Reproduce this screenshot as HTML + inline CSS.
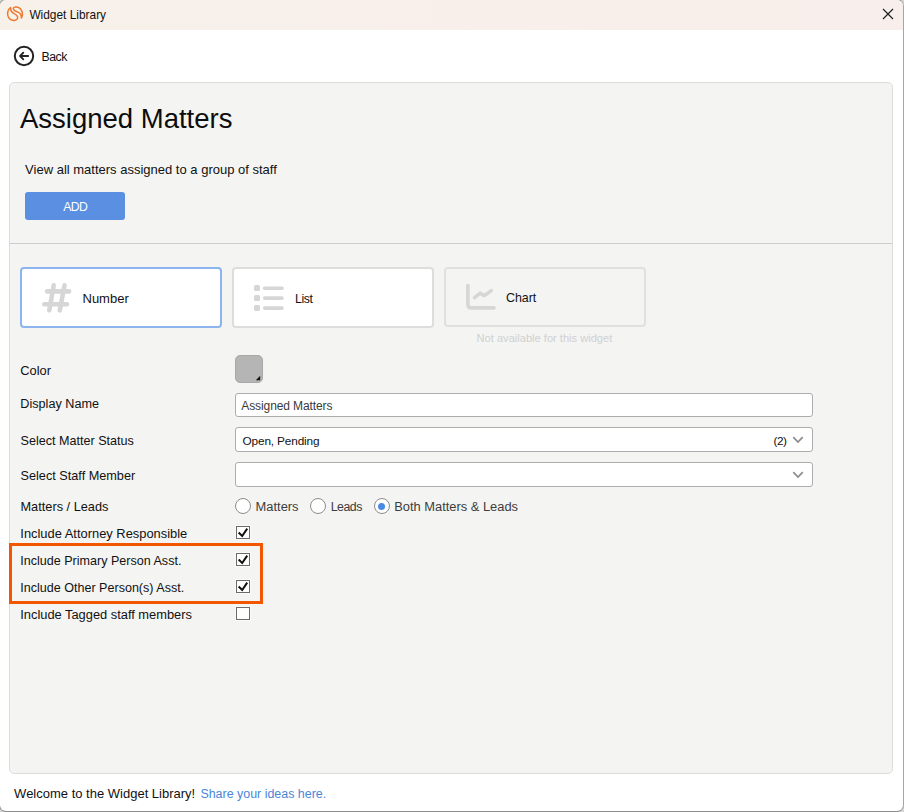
<!DOCTYPE html>
<html><head><meta charset="utf-8"><style>
*{margin:0;padding:0;box-sizing:border-box}
html,body{width:904px;height:812px;overflow:hidden;background:#d6d6d6;position:relative;font-family:"Liberation Sans",sans-serif}
#win{position:absolute;left:-1px;top:-1px;width:905px;height:813px;border:1px solid #9a9a9a;border-right-color:#a6a6a6;border-bottom-color:#8e8e8e;border-radius:7px;background:#fff;overflow:hidden}
#inner{position:absolute;left:0;top:0;width:904px;height:812px}
.t{position:absolute;white-space:nowrap}
#titlebar{position:absolute;left:0;top:0;width:903px;height:30px;background:linear-gradient(90deg,#f8f1ea,#f8eeeb)}
#panel{position:absolute;left:9px;top:82px;width:884px;height:692px;background:#f4f4f3;border:1px solid #dcdcdc;border-radius:5px}
#add{position:absolute;left:25px;top:192px;width:100px;height:28px;background:#5a8fe2;border-radius:3px}
#divider{position:absolute;left:10px;top:243px;width:882px;height:1px;background:#cdcdcd}
.card{position:absolute;width:202px;height:61px;border:2px solid #ddd;border-radius:4px}
#swatch{position:absolute;left:235px;top:355px;width:28px;height:28px;background:#b5b5b5;border:1px solid #a9a9a9;border-radius:5px}
.inp{position:absolute;left:235px;width:578px;background:#fff;border:1px solid #adadad;border-radius:3px}
.radio{position:absolute;width:16px;height:16px;border-radius:50%;border:1px solid #8c8c8c;background:#fff}
.cb{position:absolute;left:236px;width:14px;height:13px;border:1px solid #6a6a6a;background:#fff;box-shadow:0 0 0 1px rgba(255,255,255,.6)}
#hl{position:absolute;left:9px;top:543px;width:254px;height:61px;border:3px solid #f25700}
</style></head>
<body><div id="win"><div id="inner">
<div id="titlebar"></div><svg style="position:absolute;left:0;top:0" width="30" height="30" viewBox="0 0 30 30">
<g fill="none" stroke="#ef7a2f" stroke-width="1.5" stroke-linejoin="round">
<path d="M10.6 7.5 C8.2 9.3 7.4 12.6 7.7 15 C8.2 18.6 11.2 20.6 14 20.4 C16.6 20.2 18 18.6 17.6 16.8 C17.2 15.2 15.6 14.3 13.8 13.4 C11.6 12.3 10.4 10.4 10.6 7.5 Z"/>
<path d="M21.4 18 C22.6 16.2 22.6 12.6 21.4 10.2 C20.2 7.8 17.8 6.8 15.6 6.9 C13.6 7 12.8 8.6 13.7 9.8 C14.5 10.8 16.5 11.4 18.5 12.4 C20.6 13.5 21.5 15.4 21.4 18 Z"/>
</g></svg><div class="t" style="left:29.4px;top:5.27px;font-size:11.9px;line-height:20px;color:#111111;">Widget Library</div>
<svg style="position:absolute;left:880px;top:6px" width="16" height="16" viewBox="0 0 16 16">
<path d="M3 3 L13 13 M13 3 L3 13" stroke="#1a1a1a" stroke-width="1.1" fill="none"/></svg><svg style="position:absolute;left:12px;top:44px" width="24" height="24" viewBox="0 0 24 24">
<circle cx="12" cy="12" r="9.2" fill="none" stroke="#242424" stroke-width="2"/>
<path d="M16.2 12 H8.2 M11.3 8.7 L8.1 12 L11.3 15.3" fill="none" stroke="#242424" stroke-width="1.8" stroke-linecap="round" stroke-linejoin="round"/>
</svg><div class="t" style="left:41.4px;top:46.74px;font-size:12.3px;line-height:20px;color:#111111;letter-spacing:-0.45px">Back</div>
<div id="panel"></div><div class="t" style="left:20px;top:102.47px;font-size:27.5px;line-height:34px;color:#0d0d0d;">Assigned Matters</div>
<div class="t" style="left:25.1px;top:160.49px;font-size:13.0px;line-height:20px;color:#111111;">View all matters assigned to a group of staff</div>
<div id="add"></div><div class="t" style="left:63.2px;top:196.77px;font-size:12.2px;line-height:20px;color:#ffffff;letter-spacing:-0.6px">ADD</div>
<div id="divider"></div><div class="card" style="left:20px;top:267px;border-color:#8cb4ee;background:#fff"></div><div class="card" style="left:232px;top:267px;border-color:#dddddd;background:#fff"></div><div class="card" style="left:444px;top:267px;height:60px;border-color:#e0e0e0;background:#f4f4f3"></div><svg style="position:absolute;left:40px;top:281px" width="34" height="34" viewBox="0 0 34 34">
<g stroke="#d6d6d6" stroke-width="4.6" stroke-linecap="round" fill="none">
<path d="M13.7 4.3 L9.3 29.3 M24.5 4.3 L19.8 29.3 M7.1 10.4 H29.1 M4.3 23.3 H26.9"/></g></svg><div class="t" style="left:82.5px;top:289.49px;font-size:13.0px;line-height:20px;color:#111111;">Number</div>
<svg style="position:absolute;left:252px;top:283px" width="34" height="30" viewBox="0 0 34 30">
<g fill="#d6d6d6">
<rect x="2" y="2" width="6" height="6" rx="1.5"/><rect x="2" y="12" width="6" height="6" rx="1.5"/><rect x="2" y="22" width="6" height="6" rx="1.5"/>
<rect x="10.8" y="3.5" width="21" height="3.6" rx="1.8"/><rect x="10.8" y="13.3" width="21" height="3.6" rx="1.8"/><rect x="10.8" y="23.3" width="21" height="3.6" rx="1.8"/>
</g></svg><div class="t" style="left:294.9px;top:288.74px;font-size:12.3px;line-height:20px;color:#111111;letter-spacing:-0.35px">List</div>
<svg style="position:absolute;left:464px;top:281px" width="34" height="32" viewBox="0 0 34 32">
<g stroke="#d6d6d6" stroke-width="3.6" stroke-linecap="round" stroke-linejoin="round" fill="none">
<path d="M3.9 4.6 V23.4 Q3.9 26.9 7.4 26.9 H30"/><path d="M10.6 16.6 L16.2 12.2 L20.3 14.6 L27.3 9.6"/></g></svg><div class="t" style="left:506px;top:287.70px;font-size:12.4px;line-height:20px;color:#111111;">Chart</div>
<div class="t" style="left:476.6px;top:328.15px;font-size:11.1px;line-height:20px;color:#d0d0d0;">Not available for this widget</div>
<div class="t" style="left:20.3px;top:360.54px;font-size:12.85px;line-height:20px;color:#111111;">Color</div>
<div class="t" style="left:20.3px;top:393.61px;font-size:12.65px;line-height:20px;color:#111111;">Display Name</div>
<div class="t" style="left:20.5px;top:430.63px;font-size:12.6px;line-height:20px;color:#111111;">Select Matter Status</div>
<div class="t" style="left:20.5px;top:465.60px;font-size:12.7px;line-height:20px;color:#111111;">Select Staff Member</div>
<div class="t" style="left:20.5px;top:496.58px;font-size:12.75px;line-height:20px;color:#111111;">Matters / Leads</div>
<div class="t" style="left:20.3px;top:523.53px;font-size:12.9px;line-height:20px;color:#111111;">Include Attorney Responsible</div>
<div class="t" style="left:20.3px;top:550.65px;font-size:12.55px;line-height:20px;color:#111111;">Include Primary Person Asst.</div>
<div class="t" style="left:20.3px;top:577.65px;font-size:12.55px;line-height:20px;color:#111111;">Include Other Person(s) Asst.</div>
<div class="t" style="left:20.3px;top:604.54px;font-size:12.85px;line-height:20px;color:#111111;">Include Tagged staff members</div>
<div id="swatch"></div>
<svg style="position:absolute;left:255px;top:375px" width="6" height="6" viewBox="0 0 6 6"><path d="M5.2 0.8 V5.2 H0.8 Z" fill="#111"/></svg><div class="inp" style="top:393px;height:24px"></div><div class="t" style="left:241.3px;top:395.84px;font-size:12.0px;line-height:20px;color:#3a3a3a;letter-spacing:-0.1px">Assigned Matters</div>
<div class="inp" style="top:427px;height:25px"></div><div class="t" style="left:242.6px;top:430.91px;font-size:11.8px;line-height:20px;color:#111111;letter-spacing:-0.15px">Open, Pending</div>
<div class="t" style="left:773.5px;top:430.91px;font-size:11.8px;line-height:20px;color:#111111;letter-spacing:-0.5px">(2)</div>
<svg style="position:absolute;left:791px;top:435px" width="14" height="10" viewBox="0 0 14 10"><path d="M2.3 2.2 L7 7 L11.7 2.2" fill="none" stroke="#8c8c8c" stroke-width="1.7"/></svg><div class="inp" style="top:462px;height:25px"></div><svg style="position:absolute;left:791px;top:470px" width="14" height="10" viewBox="0 0 14 10"><path d="M2.3 2.2 L7 7 L11.7 2.2" fill="none" stroke="#8c8c8c" stroke-width="1.7"/></svg><div class="radio" style="left:235px;top:498px"></div><div class="t" style="left:255.6px;top:496.53px;font-size:12.88px;line-height:20px;color:#3c3c3c;">Matters</div>
<div class="radio" style="left:310px;top:498px"></div><div class="t" style="left:330.7px;top:496.74px;font-size:12.3px;line-height:20px;color:#3c3c3c;letter-spacing:-0.45px">Leads</div>
<div class="radio" style="left:373.8px;top:498px"></div><div style="position:absolute;left:378.3px;top:502.5px;width:7px;height:7px;border-radius:50%;background:#4a8ae0"></div><div class="t" style="left:394.2px;top:496.53px;font-size:12.88px;line-height:20px;color:#3c3c3c;">Both Matters &amp; Leads</div>
<div class="cb" style="top:526px"></div><svg style="position:absolute;left:236px;top:526px" width="14" height="13" viewBox="0 0 14 13"><path d="M2.6 6.6 L6.2 10 L11.2 2.6" fill="none" stroke="#111" stroke-width="2" stroke-linecap="butt" stroke-linejoin="miter"/></svg><div class="cb" style="top:553px"></div><svg style="position:absolute;left:236px;top:553px" width="14" height="13" viewBox="0 0 14 13"><path d="M2.6 6.6 L6.2 10 L11.2 2.6" fill="none" stroke="#111" stroke-width="2" stroke-linecap="butt" stroke-linejoin="miter"/></svg><div class="cb" style="top:580px"></div><svg style="position:absolute;left:236px;top:580px" width="14" height="13" viewBox="0 0 14 13"><path d="M2.6 6.6 L6.2 10 L11.2 2.6" fill="none" stroke="#111" stroke-width="2" stroke-linecap="butt" stroke-linejoin="miter"/></svg><div class="cb" style="top:607px"></div><div id="hl"></div><div class="t" style="left:14.1px;top:784.29px;font-size:13.0px;line-height:20px;color:#111111;">Welcome to the Widget Library!</div>
<div class="t" style="left:200.4px;top:783.68px;font-size:12.45px;line-height:20px;color:#4a86d8;">Share your ideas here.</div>

</div></div></body></html>
